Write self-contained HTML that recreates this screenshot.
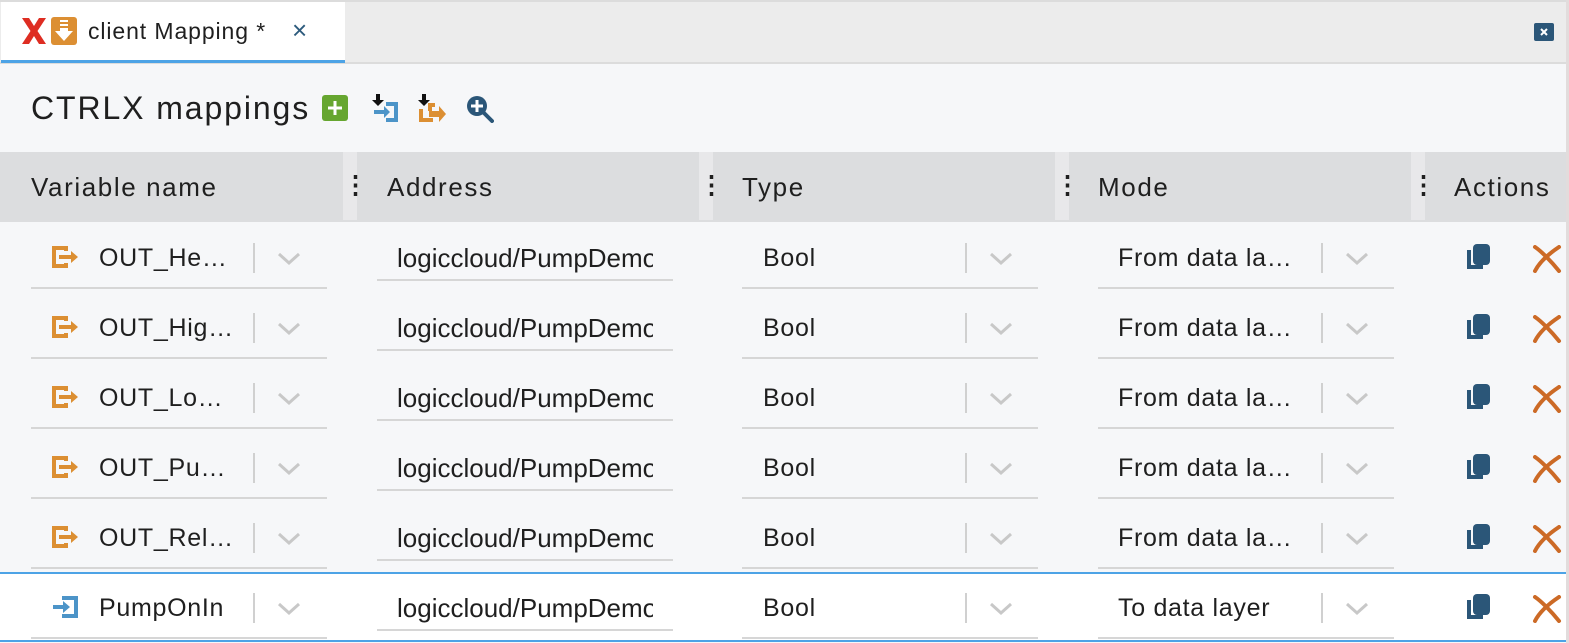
<!DOCTYPE html>
<html><head><meta charset="utf-8">
<style>
*{margin:0;padding:0;box-sizing:border-box}
body{width:1569px;height:643px;overflow:hidden;background:#f6f7f9;font-family:"Liberation Sans",sans-serif;color:#1f1f1f;position:relative}
.a{position:absolute}
.t{position:absolute;font-size:25px;line-height:30px;white-space:nowrap;letter-spacing:0.7px}
.h{font-size:26px;letter-spacing:1.6px}
</style></head><body>
<div class="a" style="left:0;top:0;width:1569px;height:64px;background:#ececec;border-top:2px solid #dcdcdc;border-bottom:2px solid #dcdcdc"></div>
<div class="a" style="left:1px;top:2px;width:344px;height:58px;background:#fff"></div>
<div class="a" style="left:1px;top:60px;width:344px;height:3px;background:#4da3e6"></div>
<svg class="a" style="left:20px;top:16px" width="58" height="30" viewBox="0 0 58 30">
<path d="M2 2h7l5 8 5-8h7l-8.5 13L26 28h-7l-5-8-5 8H2l8.5-13z" fill="#de2d22"/>
<rect x="31" y="1" width="26" height="28" rx="3" fill="#dc8f33"/>
<path d="M40 4h8v2h-8zM40 8h8v2h-8zM40 12h8v3h5l-9 10-9-10h5z" fill="#fff"/>
</svg>
<div class="t" style="left:88px;top:16px;font-size:23px;letter-spacing:0.9px">client Mapping *</div>
<div class="t" style="left:292px;top:15px;font-size:26px;color:#2d5b7d">×</div>
<svg class="a" style="left:1534px;top:23px" width="20" height="18"><rect width="20" height="18" rx="2" fill="#2b5678"/><path d="M7 6l6 6M13 6l-6 6" stroke="#fff" stroke-width="2"/></svg>
<div class="t" style="left:31px;top:91px;font-size:32px;line-height:34px;letter-spacing:1.9px">CTRLX mappings</div>
<svg class="a" style="left:322px;top:95px" width="26" height="26"><rect width="26" height="26" rx="3" fill="#66a630"/><path d="M13 6v14M6 13h14" stroke="#fff" stroke-width="3"/></svg>
<svg class="a" style="left:370px;top:93px" width="30" height="30" viewBox="0 0 30 30">
<path d="M6 1v6H2l6 6 6-6h-4V1z" fill="#111"/>
<path d="M16 9h12v20H16v-4h8V13h-8z" fill="#4c94c8"/><path d="M4 17h10v-4l6 6-6 6v-4H4z" fill="#4c94c8"/></svg>
<svg class="a" style="left:416px;top:93px" width="32" height="30" viewBox="0 0 32 30">
<path d="M6 1v6H2l6 6 6-6h-4V1z" fill="#111"/>
<path d="M3 16h4v9h10v4H3zM12 10h7v4h-3v4h-4z" fill="#dc8f33"/><path d="M13 18h10v-5l7 8-7 8v-5H13z" fill="#dc8f33"/></svg>
<svg class="a" style="left:466px;top:95px" width="28" height="28" viewBox="0 0 28 28">
<circle cx="11" cy="11" r="10" fill="#2b5678"/><path d="M11 5v12M5 11h12" stroke="#fff" stroke-width="3"/><path d="M18 18l8 8" stroke="#2b5678" stroke-width="4" stroke-linecap="round"/></svg>
<div class="a" style="left:0;top:152px;width:1569px;height:70px;background:#dcdddf"></div>
<div class="a" style="left:343px;top:152px;width:14px;height:68px;background:#e8e8ea"></div>
<div class="a" style="left:699px;top:152px;width:14px;height:68px;background:#e8e8ea"></div>
<div class="a" style="left:1055px;top:152px;width:14px;height:68px;background:#e8e8ea"></div>
<div class="a" style="left:1411px;top:152px;width:14px;height:68px;background:#e8e8ea"></div>
<div class="t h" style="left:31px;top:172px">Variable name</div>
<div class="t h" style="left:387px;top:172px">Address</div>
<div class="t h" style="left:742px;top:172px">Type</div>
<div class="t h" style="left:1098px;top:172px">Mode</div>
<div class="t h" style="left:1454px;top:172px">Actions</div>
<div class="t" style="left:343px;top:170px;width:14px;text-align:center;font-weight:bold;letter-spacing:0">⋮</div>
<div class="t" style="left:699px;top:170px;width:14px;text-align:center;font-weight:bold;letter-spacing:0">⋮</div>
<div class="t" style="left:1055px;top:170px;width:14px;text-align:center;font-weight:bold;letter-spacing:0">⋮</div>
<div class="t" style="left:1411px;top:170px;width:14px;text-align:center;font-weight:bold;letter-spacing:0">⋮</div>
<div class="a" style="left:1566px;top:0;width:3px;height:643px;background:#e2dcdc"></div>
<div class="a" style="left:0;top:572px;width:1566px;height:70px;background:#fff;border-top:2px solid #4da3e6;border-bottom:2px solid #4da3e6"></div>

<div id="rows"></div>
<script>
var names=["OUT_He…","OUT_Hig…","OUT_Lo…","OUT_Pu…","OUT_Rel…","PumpOnIn"];
var h="";
for(var i=0;i<6;i++){
 var y=222+70*i, c=y+36;
 var inn=i==5;
 var icon=inn?'<svg class="a" style="left:52px;top:'+(c-13)+'px" width="28" height="24" viewBox="0 0 28 24"><path d="M10 1h16v22H10v-4h12V5H10z" fill="#4c94c8"/><path d="M1 10h10V6l7 6-7 6v-4H1z" fill="#4c94c8"/></svg>'
 :'<svg class="a" style="left:51px;top:'+(c-13)+'px" width="28" height="24" viewBox="0 0 28 24"><path d="M1 1h16v5h-4V5H5v14h8v-1h4v5H1z" fill="#dc8f33"/><path d="M8 10h12V6l7 6-7 6v-4H8z" fill="#dc8f33"/></svg>';
 h+=icon;
 h+='<div class="t" style="left:99px;top:'+(c-15)+'px">'+names[i]+'</div>';
 var chev=function(x){return '<div class="a" style="left:'+x+'px;top:'+(c-15)+'px;width:2px;height:30px;background:#d0d0d0"></div><svg class="a" style="left:'+(x+24)+'px;top:'+(c-6)+'px" width="24" height="14"><path d="M2 2l10 9 10-9" stroke="#c8c8c8" stroke-width="3" fill="none"/></svg>';};
 h+=chev(253);
 h+='<div class="a" style="left:31px;top:'+(y+65)+'px;width:296px;height:2px;background:#d6d6d6"></div>';
 h+='<div class="t" style="left:397px;top:'+(c-15)+'px;width:256px;overflow:hidden;font-size:26px;letter-spacing:0">logiccloud/PumpDemo</div>';
 h+='<div class="a" style="left:377px;top:'+(y+57)+'px;width:296px;height:2px;background:#d6d6d6"></div>';
 h+='<div class="t" style="left:763px;top:'+(c-15)+'px">Bool</div>'+chev(965);
 h+='<div class="a" style="left:742px;top:'+(y+65)+'px;width:296px;height:2px;background:#d6d6d6"></div>';
 h+='<div class="t" style="left:1118px;top:'+(c-15)+'px">'+(inn?'To data layer':'From data la…')+'</div>'+chev(1321);
 h+='<div class="a" style="left:1098px;top:'+(y+65)+'px;width:296px;height:2px;background:#d6d6d6"></div>';
 h+='<svg class="a" style="left:1465px;top:'+(c-15)+'px" width="26" height="28" viewBox="0 0 26 28"><rect x="8" y="1" width="17" height="21" rx="4" fill="#2b5678"/><path d="M6 7H2v19h16v-4H6z" fill="#2b5678"/></svg>';
 h+='<svg class="a" style="left:1532px;top:'+(c-13)+'px" width="30" height="28" viewBox="0 0 30 28"><path d="M3 2c6 4 16 14 24 24M27 2C18 8 8 16 3 26" stroke="#cc6a26" stroke-width="4" fill="none" stroke-linecap="round"/></svg>';
}
document.getElementById("rows").innerHTML=h;
</script>
</body></html>
